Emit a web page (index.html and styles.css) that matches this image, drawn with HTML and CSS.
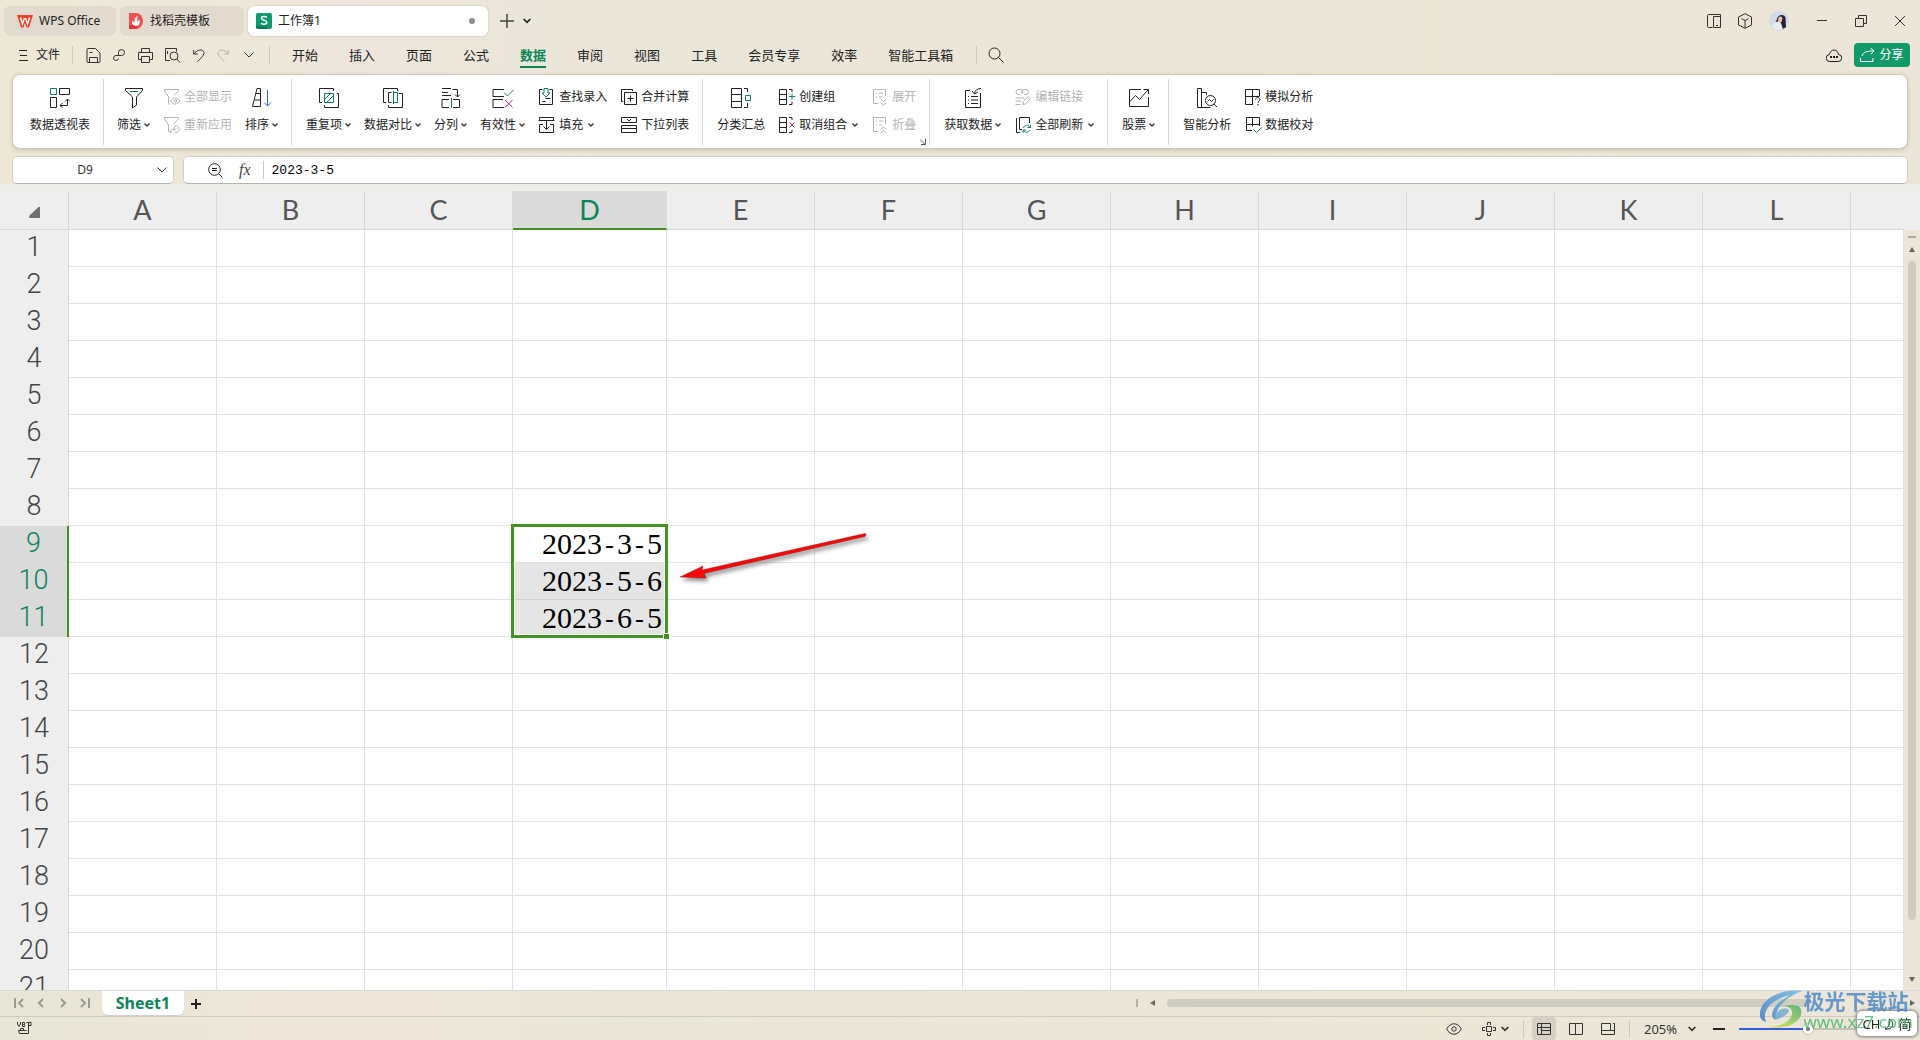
FILE: index.html
```html
<!DOCTYPE html>
<html lang="zh-CN">
<head>
<meta charset="utf-8">
<title>工作簿1 - WPS Office</title>
<link rel="stylesheet" href="styles.css">
</head>
<body>
<svg class="sprite" aria-hidden="true">
  <symbol id="chev" viewBox="0 0 6 6"><path d="M.5 1.500 3 4l2.500-2.500" fill="none" stroke="currentColor" stroke-width="1.300"/></symbol>
  <symbol id="chev-l" viewBox="0 0 10 6"><path d="M.5.5 5 5 9.500.5" fill="none" stroke="currentColor" stroke-width="1"/></symbol>
</svg>
<div class="app">
  <header class="titlebar">
    <button class="doc-tab tab-home">
      <svg width="16" height="13" viewBox="0 0 16 13"><path d="M0 0h16l-4 12.500H9.500L8 8l-1.500 4.500H4z" fill="#f5402c"/><path d="M3.500 2.500 5.500 9 7.500 3M8.500 3l2 6 2-6.500" fill="none" stroke="#fff" stroke-width="1.400"/></svg>
      <span>WPS Office</span></button>
    <button class="doc-tab tab-docer">
      <svg width="14" height="16" viewBox="0 0 14 16"><path d="M0 0h7a7 8 0 0 1 0 16H0z" fill="#ef5350"/><path d="M0 12h8v4H0z" fill="#d9363e"/><path d="M7 13C2 12 3 9 3.500 8l2 2C5 7 6 4 8.500 3 8 5 9 7 8 9l2.500-2C11.500 10 10 13 7 13z" fill="#fff"/></svg>
      <span>找稻壳模板</span></button>
    <button class="doc-tab tab-book">
      <svg width="16" height="16" viewBox="0 0 16 16"><rect width="16" height="16" rx="2" fill="#12996a"/><path d="M0 13h9l3 3H2a2 2 0 0 1-2-2z" fill="#0a7a52"/><path d="M10.800 4.600C10 3.400 5.500 2.800 5.500 5.200S10.800 7 10.800 9.200 6 12 5.200 9.900" fill="none" stroke="#fff" stroke-width="1.500"/></svg>
      <span>工作簿1</span><i class="dot"></i></button>
    <button class="new-tab" aria-label="新建"><svg width="14" height="14" viewBox="0 0 14 14"><path d="M7 0v14M0 7h14" stroke="#444" stroke-width="1.500"/></svg></button>
    <button class="new-more" aria-label="更多"><svg width="8" height="8"><use href="#chev"/></svg></button>
    <div class="window-tools">
      <button aria-label="面板"><svg width="14" height="14" viewBox="0 0 14 14" class="ln"><path d="M5.500 13.500h-4a1 1 0 0 1-1-1v-11a1 1 0 0 1 1-1h12v13h-7v-11h7M9 11.500h2"/></svg></button>
      <button aria-label="应用"><svg width="14" height="16" viewBox="0 0 14 16" class="ln"><path d="M7 .7 13.500 4v8L7 15.300.5 12V4zM3.500 5.700 7 7.500l3.500-1.800M7 7.500v7.500"/></svg></button>
      <button aria-label="账户"><svg width="20" height="20" viewBox="0 0 20 20"><circle cx="10" cy="10" r="10" fill="#cfdbe4"/><path d="M8 8c1-5 8-5 8.500-1l.5 9-3 2-2-6z" fill="#2b2230"/><path d="M9 8c1-3 3-3 4.500-1l-1 4-2.500 1z" fill="#e9c3b4"/><path d="M6.500 10.500 9 7v4z" fill="#4b3038"/><path d="M3 16c1-5 5-6 8-4l2 6c-3 2-8 1-10-2z" fill="#e6eef2"/></svg></button>
      <button aria-label="最小化"><svg width="10" height="10" viewBox="0 0 10 10" class="ln"><path d="M0 4.500h10"/></svg></button>
      <button aria-label="还原"><svg width="12" height="12" viewBox="0 0 12 12" class="ln"><path d="M.5 3.500h8v8h-8zM3.500 3.500v-3h8v8h-3"/></svg></button>
      <button aria-label="关闭"><svg width="10" height="10" viewBox="0 0 10 10" class="ln"><path d="m0 0 10 10M10 0 0 10"/></svg></button>
    </div>
  </header>

  <nav class="menubar">
    <button class="file-btn"><svg width="9" height="11" viewBox="0 0 9 11" class="ln"><path d="M0 .5h8M1 5.500h7M0 10.500h9"/></svg>文件</button>
    <i class="vline"></i>
    <div class="qat">
      <button aria-label="保存"><svg width="15" height="15" viewBox="0 0 15 15" class="ln"><path d="M2 .5h7.500l4.500 4.500v8.500a1 1 0 0 1-1 1H2a1 1 0 0 1-1-1v-12a1 1 0 0 1 1-1zM3.500 14.500v-5h8v5M3.500 4.500h3"/></svg></button>
      <button aria-label="导出"><svg width="13" height="13" viewBox="0 0 13 13" class="ln"><path d="M5.500 6.500V3.500a3 3 0 1 1 3 3h-5.500a2.500 2.500 0 1 0 2.500 3"/></svg></button>
      <button aria-label="打印"><svg width="15" height="15" viewBox="0 0 15 15" class="ln"><path d="M3.500 4.500v-4h8v4M3.500 11.500h-3v-7h14v7h-3M3.500 8.500h8v6h-8z"/></svg></button>
      <button aria-label="打印预览"><svg width="16" height="15" viewBox="0 0 16 15" class="ln"><path d="M5 12.500H.5V.5h11v3M2.500 3v3"/><circle cx="9" cy="8" r="4"/><path d="m12 11 3 3.500"/></svg></button>
      <button aria-label="撤销"><svg width="12" height="13" viewBox="0 0 12 13" class="ln"><path d="M.7 1v4h4M.7 5C4 1 8 .5 9.500 1.500 13 4 10 7.500 4.500 12.500"/></svg></button>
      <button aria-label="恢复" class="off"><svg width="12" height="13" viewBox="0 0 12 13" class="ln"><path d="M11.300 1v4h-4M11.300 5C8 1 4 .5 2.500 1.500-1 4 2 7.500 7.500 12.500"/></svg></button>
      <button aria-label="更多命令" class="qat-more"><svg width="10" height="6"><use href="#chev-l"/></svg></button>
    </div>
    <i class="vline"></i>
    <div class="menu-tabs">
      <a href="#">开始</a><a href="#">插入</a><a href="#">页面</a><a href="#">公式</a><a href="#" class="on">数据</a><a href="#">审阅</a><a href="#">视图</a><a href="#">工具</a><a href="#">会员专享</a><a href="#">效率</a><a href="#">智能工具箱</a>
    </div>
    <i class="vline"></i>
    <button class="search" aria-label="搜索"><svg width="16" height="16" viewBox="0 0 16 16" class="ln"><circle cx="6.500" cy="6.500" r="5.500"/><path d="m10.500 10.500 5 5"/></svg></button>
    <div class="share-area">
      <button aria-label="云状态"><svg width="16" height="13" viewBox="0 0 16 13" class="ln"><path d="M4 12.500a3.500 3.500 0 0 1-.5-7c1-6 8-6 9 0a3.500 3.500 0 0 1-.5 7z"/><path d="M4 8h2M7 8h2M10 8h2" stroke-width="2"/></svg></button>
      <button class="share"><svg width="15" height="15" viewBox="0 0 15 15" class="ln"><path d="M.5 10v3.500h12.500V10M2 8c1-3.500 4-5 11.500-5M10.500 0l3.500 3-3.500 3.500"/></svg>分享</button>
    </div>
  </nav>

  <section class="ribbon">
    <div class="group">
      <button class="big"><svg width="20" height="20" viewBox="0 0 20 20" class="ln"><path d="M9.500.5h10v6h-10zM.5 9.500h6v10h-6z"/><path d="M.5.500h6v6h-6z" class="g"/><path d="M10 17.500h7.500V11M12.500 15 10 17.500l2.500 2M15 13.500 17.500 11l2.500 2.500"/></svg><span>数据透视表</span></button>
    </div>
    <div class="group">
      <button class="big"><svg width="20" height="20" viewBox="0 0 20 20" class="ln"><path d="M1.500.5h17v2L12.500 9v8l-4 3V9L1.500 2.500z"/><path d="M6 3.500h8" class="g"/></svg><span>筛选<svg class="cv"><use href="#chev"/></svg></span></button>
      <div class="stack">
        <button class="small" disabled><svg width="18" height="18" viewBox="0 0 18 18" class="ln"><path d="M5.500 15.500V9L1.500 3V1.500h14V3L11 7.500M5.500 15.500 7 16.500"/><path d="M7.500 13c2-4 7-4 9.500 0-2.500 4-7.500 4-9.500 0z"/><circle cx="12.300" cy="13" r="1.300"/></svg>全部显示</button>
        <button class="small" disabled><svg width="18" height="18" viewBox="0 0 18 18" class="ln"><path d="M5.500 15.500V9L1.500 3V1.500h14V3L10.500 8M5.500 15.500 8 16.500V13M12 16.500h2c3-1 3-6-.5-6.500-2.500 0-2.500 3-2.500 4M9.500 12.500l1.500 2 2-2"/></svg>重新应用</button>
      </div>
      <button class="big"><svg width="20" height="20" viewBox="0 0 20 20" class="ln"><path d="M.5 18.500 5 .5h3.500v18zM4 5.500h4.500M2.500 12h6"/><path d="M15.500 2v16M12 14.500l3.500 3.500 3.500-3.500" class="b"/></svg><span>排序<svg class="cv"><use href="#chev"/></svg></span></button>
    </div>
    <div class="group">
      <button class="big"><svg width="20" height="20" viewBox="0 0 20 20" class="ln"><path d="M3 14.500H.5V.5h14V3M18 5.500h1.500v14h-14V17"/><path d="M5.500 5.500h9v9h-9zM6 11l5-5M8 14l6-6" class="g"/></svg><span>重复项<svg class="cv"><use href="#chev"/></svg></span></button>
      <button class="big"><svg width="20" height="20" viewBox="0 0 20 20" class="ln"><path d="M3 14.500H.5V.5h14V3M8.500 4.500h-3v10h3M16 5.500h3.500v14h-14V17"/><path d="M10.500 3v13M10.500 4.500h4v10h-4" class="g"/></svg><span>数据对比<svg class="cv"><use href="#chev"/></svg></span></button>
      <button class="big"><svg width="20" height="20" viewBox="0 0 20 20" class="ln"><path d="M1 .5h9M1 4.500h6M1 7.500h9M11.500 1.500h5V9M14 6.500 16.500 9 19 6.500M8 11.500H1v8h7M12 11.500h6.500v8H12"/><path d="M10.500 10v10" class="g"/></svg><span>分列<svg class="cv"><use href="#chev"/></svg></span></button>
      <button class="big"><svg width="22" height="20" viewBox="0 0 22 20" class="ln"><path d="M12 1.500H1v7h11M11 11.500H1v8h11"/><path d="m12 4.500 3.500 3.500 6-6" class="g"/><path d="m13 12 7.500 7.500m0-7.500L13 19.500" class="r"/></svg><span>有效性<svg class="cv"><use href="#chev"/></svg></span></button>
      <div class="stack">
        <button class="small"><svg width="18" height="18" viewBox="0 0 18 18" class="ln"><path d="M4.500 1.500h-3v15h13v-15h-3M4.500 13.500h3M7.500 10.500h5"/><path d="M6 .5h4V5h2L8 9 4 5h2z" class="g"/></svg>查找录入</button>
        <button class="small"><svg width="18" height="18" viewBox="0 0 18 18" class="ln"><path d="M1.500 4V1.500h14V4M.5 4.500h16M5 8.500H1.500v8h14v-8H12M8.500 4.500V13M5.500 10.500l3 3 3-3"/></svg>填充<svg class="cv wide"><use href="#chev"/></svg></button>
      </div>
      <div class="stack">
        <button class="small"><svg width="18" height="18" viewBox="0 0 18 18" class="ln"><path d="M3 13.500H1.500v-12h11V3M4.500 4.500h12v12h-12zM10.500 7.500v6M7.500 10.500h6"/></svg>合并计算</button>
        <button class="small"><svg width="18" height="18" viewBox="0 0 18 18" class="ln"><path d="M1.500 1.500h15v5h-15zM1.500 9.500h15v3h-15zM1.500 12.500h15v4h-15zM7 3l2 2 2-2"/></svg>下拉列表</button>
      </div>
    </div>
    <div class="group">
      <button class="big"><svg width="20" height="20" viewBox="0 0 20 20" class="ln"><path d="M.5.5h10v19H.5zM.5 6.500h10M.5 13.500h10M13 .5h3.500V4M16.500 15v4.500H13"/><path d="M14.500 7.500h5v5h-5z" class="g"/></svg><span>分类汇总</span></button>
      <div class="stack">
        <button class="small"><svg width="18" height="18" viewBox="0 0 18 18" class="ln"><path d="M1.500 1.500h7v15h-7zM1.500 6.500h7M1.500 11.500h7M11 1.500h3V4M14 14v2.500h-3"/><path d="M11 8.500h6M14 5.500v6" class="g"/></svg>创建组</button>
        <button class="small"><svg width="18" height="18" viewBox="0 0 18 18" class="ln"><path d="M1.500 1.500h7v15h-7zM1.500 6.500h7M1.500 11.500h7M11 1.500h3V4M14 14v2.500h-3"/><path d="m11.500 6.500 5 5m0-5-5 5" class="r"/></svg>取消组合<svg class="cv wide"><use href="#chev"/></svg></button>
      </div>
      <div class="stack">
        <button class="small" disabled><svg width="18" height="18" viewBox="0 0 18 18" class="ln"><path d="M7 15.500H2.500v-14h12V8M5 5h1M8 5h4M5 9h1M8 9h3M9.500 11l3 2.500 3-2.500M9.500 14.500l3 2.500 3-2.500"/></svg>展开</button>
        <button class="small" disabled><svg width="18" height="18" viewBox="0 0 18 18" class="ln"><path d="M7 15.500H2.500v-14h12V8M5 5h1M8 5h4M5 9h1M8 9h3M9.500 13.500l3-2.500 3 2.500M9.500 17l3-2.500 3 2.500"/></svg>折叠</button>
      </div>
      <button class="launcher" aria-label="分级显示设置"><svg width="6" height="6" viewBox="0 0 6 6" class="ln"><path d="M0 .5l4.500 4.500M5.500 0v5.500H1"/></svg></button>
    </div>
    <div class="group">
      <button class="big"><svg width="20" height="20" viewBox="0 0 20 20" class="ln"><path d="M7 2.500H2.500v17h15V5M5 8.500h1M8 8.500h7M5 12h1M8 12h7M5 15.500h1M8 15.500h7M18 .5c-4 0-6 2-6.500 5M9 3l2.500 3L15 4"/></svg><span>获取数据<svg class="cv"><use href="#chev"/></svg></span></button>
      <div class="stack">
        <button class="small" disabled><svg width="18" height="18" viewBox="0 0 18 18" class="ln"><path d="M6 6.500H4.500a2.500 2.500 0 0 1 0-5H6a2.500 2.500 0 0 1 2.500 4M10 6.500h2a2.500 2.500 0 0 0 0-5h-2a2.500 2.500 0 0 0-2 4M1.500 10h9M1.500 13h6M1.500 16.500h5M9 16.500l.5-3L14 8.500l2.500 2-5 5.500z"/></svg>编辑链接</button>
        <button class="small"><svg width="18" height="18" viewBox="0 0 18 18" class="ln"><path d="M2.500 2v14.500H6M8 13.500H5.500v-12h10V7"/><path d="M16 11.500c-1-3-6-3-6.500.5M9.500 14c.5 3 5.500 3 6.500 0M16.500 8.500v3h-3M9 17v-3h3" class="g"/></svg>全部刷新<svg class="cv wide"><use href="#chev"/></svg></button>
      </div>
    </div>
    <div class="group">
      <button class="big"><svg width="20" height="20" viewBox="0 0 20 20" class="ln"><path d="M12 1.500H.5v17h19V9M1 13.500l5.500-6 4 4L19 2M14.500 1.500h5V6"/></svg><span>股票<svg class="cv"><use href="#chev"/></svg></span></button>
    </div>
    <div class="group last">
      <button class="big"><svg width="22" height="20" viewBox="0 0 22 20" class="ln"><path d="M1.500.5h4v19h-4zM5.500 4.500h5V7M5.500 19.500h9"/><circle cx="14.500" cy="12.500" r="5"/><path d="m18 16 3 3M11.500 13.500l2-2 2 2 2-2"/></svg><span>智能分析</span></button>
      <div class="stack">
        <button class="small"><svg width="18" height="18" viewBox="0 0 18 18" class="ln"><path d="M1.500 1.500h14V8M1.500 1.500v15H9M8.500 1.500v15M1.500 8.500h14M11.500 11.500c0-2.500 4.500-2.500 4.500 0 0 1.500-2 1.500-2 3.500M14 16v1.500"/></svg>模拟分析</button>
        <button class="small"><svg width="18" height="18" viewBox="0 0 18 18" class="ln"><path d="M8 14.500H2.500v-13h13V10M8.500 1.500v9M2.500 8.500h13"/><path d="m9.500 13.500 3 3 5-5" class="g"/></svg>数据校对</button>
      </div>
    </div>
  </section>

  <section class="formula-row">
    <div class="name-box"><input type="text" value="D9" aria-label="名称框"><button aria-label="展开名称框"><svg width="10" height="6"><use href="#chev-l"/></svg></button></div>
    <div class="formula-box">
      <button aria-label="缩放"><svg width="15" height="15" viewBox="0 0 15 15" class="ln"><circle cx="6.500" cy="6.500" r="5.800"/><path d="m10.500 10.500 4 4M4 5.500h5M4 7.500h5"/></svg></button>
      <button class="fx" aria-label="插入函数"><i>f</i><b>x</b></button>
      <i class="vline"></i>
      <input type="text" value="2023-3-5" aria-label="编辑栏">
    </div>
  </section>

  <main class="sheet">
    <div class="grid-pane">
      <table class="grid">
        <colgroup><col class="c-head"><col><col><col><col class="c-date"><col><col><col><col><col><col><col><col><col class="c-rest"></colgroup>
        <thead><tr><th class="corner"><svg width="11" height="11" viewBox="0 0 11 11"><path d="M11 0v11H1q-2-1 0-3L9 .5q1-1 2-.5z" fill="#707070"/></svg></th><th>A</th><th>B</th><th>C</th><th class="sel">D</th><th>E</th><th>F</th><th>G</th><th>H</th><th>I</th><th>J</th><th>K</th><th>L</th><th></th></tr></thead>
        <tbody>
          <tr><th>1</th><td></td><td></td><td></td><td></td><td></td><td></td><td></td><td></td><td></td><td></td><td></td><td></td><td></td></tr>
          <tr><th>2</th><td></td><td></td><td></td><td></td><td></td><td></td><td></td><td></td><td></td><td></td><td></td><td></td><td></td></tr>
          <tr><th>3</th><td></td><td></td><td></td><td></td><td></td><td></td><td></td><td></td><td></td><td></td><td></td><td></td><td></td></tr>
          <tr><th>4</th><td></td><td></td><td></td><td></td><td></td><td></td><td></td><td></td><td></td><td></td><td></td><td></td><td></td></tr>
          <tr><th>5</th><td></td><td></td><td></td><td></td><td></td><td></td><td></td><td></td><td></td><td></td><td></td><td></td><td></td></tr>
          <tr><th>6</th><td></td><td></td><td></td><td></td><td></td><td></td><td></td><td></td><td></td><td></td><td></td><td></td><td></td></tr>
          <tr><th>7</th><td></td><td></td><td></td><td></td><td></td><td></td><td></td><td></td><td></td><td></td><td></td><td></td><td></td></tr>
          <tr><th>8</th><td></td><td></td><td></td><td></td><td></td><td></td><td></td><td></td><td></td><td></td><td></td><td></td><td></td></tr>
          <tr><th class="sel">9</th><td></td><td></td><td></td><td class="date first">2023<s>-</s>3<s>-</s>5<div class="selection"></div></td><td></td><td></td><td></td><td></td><td></td><td></td><td></td><td></td><td></td></tr>
          <tr><th class="sel">10</th><td></td><td></td><td></td><td class="date shade">2023<s>-</s>5<s>-</s>6</td><td></td><td></td><td></td><td></td><td></td><td></td><td></td><td></td><td></td></tr>
          <tr><th class="sel">11</th><td></td><td></td><td></td><td class="date shade">2023<s>-</s>6<s>-</s>5</td><td></td><td></td><td></td><td></td><td></td><td></td><td></td><td></td><td></td></tr>
          <tr><th>12</th><td></td><td></td><td></td><td></td><td></td><td></td><td></td><td></td><td></td><td></td><td></td><td></td><td></td></tr>
          <tr><th>13</th><td></td><td></td><td></td><td></td><td></td><td></td><td></td><td></td><td></td><td></td><td></td><td></td><td></td></tr>
          <tr><th>14</th><td></td><td></td><td></td><td></td><td></td><td></td><td></td><td></td><td></td><td></td><td></td><td></td><td></td></tr>
          <tr><th>15</th><td></td><td></td><td></td><td></td><td></td><td></td><td></td><td></td><td></td><td></td><td></td><td></td><td></td></tr>
          <tr><th>16</th><td></td><td></td><td></td><td></td><td></td><td></td><td></td><td></td><td></td><td></td><td></td><td></td><td></td></tr>
          <tr><th>17</th><td></td><td></td><td></td><td></td><td></td><td></td><td></td><td></td><td></td><td></td><td></td><td></td><td></td></tr>
          <tr><th>18</th><td></td><td></td><td></td><td></td><td></td><td></td><td></td><td></td><td></td><td></td><td></td><td></td><td></td></tr>
          <tr><th>19</th><td></td><td></td><td></td><td></td><td></td><td></td><td></td><td></td><td></td><td></td><td></td><td></td><td></td></tr>
          <tr><th>20</th><td></td><td></td><td></td><td></td><td></td><td></td><td></td><td></td><td></td><td></td><td></td><td></td><td></td></tr>
          <tr><th>21</th><td></td><td></td><td></td><td></td><td></td><td></td><td></td><td></td><td></td><td></td><td></td><td></td><td></td></tr>
        </tbody>
      </table>
      <svg class="pointer" width="200" height="60" viewBox="0 0 200 60"><path d="M2 47 25 36l-1 4L187 3.500q2 1 0 3L26 43.500l2 4.500z" fill="#f80808" stroke="#8a1010" stroke-width=".4"/></svg>
    </div>
    <div class="vscroll">
      <i class="split"></i>
      <svg width="8" height="5" viewBox="0 0 8 5"><path d="M4 0 7 5H1z" fill="#666"/></svg>
      <i class="thumb"></i>
      <svg width="8" height="5" viewBox="0 0 8 5"><path d="M4 5 7 0H1z" fill="#666"/></svg>
    </div>
  </main>

  <div class="sheetbar">
    <div class="sheet-nav">
      <button aria-label="第一张"><svg width="10" height="10" viewBox="0 0 10 10"><path d="M1 0v10M9 1 5 5l4 4"/></svg></button>
      <button aria-label="上一张"><svg width="10" height="10" viewBox="0 0 10 10"><path d="M7 1 3 5l4 4"/></svg></button>
      <button aria-label="下一张"><svg width="10" height="10" viewBox="0 0 10 10"><path d="m3 1 4 4-4 4"/></svg></button>
      <button aria-label="最后一张"><svg width="10" height="10" viewBox="0 0 10 10"><path d="M9 0v10M1 1l4 4-4 4"/></svg></button>
    </div>
    <button class="sheet-tab">Sheet1</button>
    <button class="sheet-add" aria-label="新建工作表"><svg width="10" height="10" viewBox="0 0 10 10"><path d="M5 0v10M0 5h10" stroke="#222" stroke-width="2"/></svg></button>
    <div class="hscroll">
      <i class="split"></i>
      <svg width="5" height="6" viewBox="0 0 5 6"><path d="M0 3 5 0v6z" fill="#666"/></svg>
      <i class="track"><i class="thumb"></i></i>
      <svg width="5" height="6" viewBox="0 0 5 6"><path d="M5 3 0 0v6z" fill="#666"/></svg>
    </div>
  </div>

  <footer class="status">
    <svg width="15" height="13" viewBox="0 0 15 13" class="ln"><path d="M.5 0v2L2 4.500 3.500 2V0M5.500.500h2L8 2 6.500 2.500 8 3.500 7.500 4.500h-2zM9.500.5h4.500v3h-2.500M11.500.5v11h-9l-1-3h8M3.500 8.500v-2h3v2"/></svg>
    <div class="status-right">
      <button aria-label="护眼模式"><svg width="16" height="12" viewBox="0 0 16 12" class="ln"><path d="M.7 6c3.600-7 11-7 14.600 0-3.600 7-11 7-14.600 0z"/><circle cx="8" cy="6" r="2.200"/></svg></button>
      <button class="focus-btn" aria-label="阅读模式"><svg width="14" height="14" viewBox="0 0 14 14" class="ln"><path d="M4.500 4.500h5v5h-5zM5.500 3V.5h3V3M5.500 11v2.500h3V11M3 5.500H.5v3H3M11 5.500h2.500v3H11"/></svg><svg width="8" height="8"><use href="#chev"/></svg></button>
      <i class="vline"></i>
      <button class="view on" aria-label="普通视图"><svg width="14" height="12" viewBox="0 0 14 12" class="ln"><path d="M.5.5h13v11H.5zM4.500.5v11M.5 4.500h13M5 7.500h8.500"/></svg></button>
      <button class="view" aria-label="分页预览"><svg width="14" height="12" viewBox="0 0 14 12" class="ln"><path d="M.5.5h13v11H.5zM6.500.5v11"/></svg></button>
      <button class="view" aria-label="页面布局"><svg width="14" height="12" viewBox="0 0 14 12" class="ln"><path d="M.5.5h9v7h-9zM.5 7.500v4h13V.5H12M9.500 7.500h4"/></svg></button>
      <i class="vline"></i>
      <label class="zoom"><select aria-label="显示比例"><option>205%</option></select><svg width="8" height="8"><use href="#chev"/></svg></label>
      <button class="minus" aria-label="缩小"><svg width="12" height="12" viewBox="0 0 12 12"><path d="M0 6h12" stroke="#222" stroke-width="2"/></svg></button>
      <input type="range" min="0" max="100" value="50" aria-label="缩放滑块">
    </div>
  </footer>
</div>

<div class="ime"><span>CH</span><svg width="10" height="12" viewBox="0 0 10 12" class="ln"><path d="M5 1c5 2 5 9 0 10H1c4-2 6-6 4-10z"/></svg><span>简</span></div>
<div class="watermark">
  <svg width="44" height="40" viewBox="0 0 44 40">
    <defs><linearGradient id="wa" x1="0" y1="1" x2="1" y2="0"><stop offset="0" stop-color="#3a78c0"/><stop offset="1" stop-color="#64bce8"/></linearGradient>
    <linearGradient id="wb" x1="0" y1="1" x2="1" y2="0"><stop offset="0" stop-color="#e8e23c"/><stop offset="1" stop-color="#3cab68"/></linearGradient></defs>
    <path d="M43 1C20-2 0 11 1 25c0 4 3 6 6 7-4-10 3-22 24-27-14 8-18 15-18 20 0 3 2 4 4 5-1-12 8-22 26-29z" fill="url(#wa)"/>
    <path d="M25 16c14-3 19 1 17 9-3 9-17 15-36 12 12 0 22-3 26-10 3-6 0-10-7-11z" fill="url(#wb)"/>
    <path d="M16 30c5-2 13-4 14-10-5-4-15 1-14 10z" fill="#6ba6d6"/>
  </svg>
  <div><p class="wm-name">极光下载站</p><p class="wm-url">www.xz7.com</p></div>
</div>
</body>
</html>
```

FILE: styles.css
```css
* { box-sizing: border-box; }
body {
  margin: 0;
  font: 12px/18px "Noto Sans", "Noto Sans CJK SC", sans-serif;
  color: #222;
}
button, input, select {
  font: inherit;
  color: inherit;
  background: none;
  border: 0;
  padding: 0;
  margin: 0;
}
button { display: flex; align-items: center; justify-content: center; white-space: nowrap; }
svg { display: block; flex: none; }
p { margin: 0; }
.sprite { position: absolute; width: 0; height: 0; }
.ln { fill: none; stroke: currentColor; stroke-width: 1; }
.ln .g { stroke: #0b8457; }
.ln .b { stroke: #2f5fe0; }
.ln .r { stroke: #d02850; }
.vline { width: 1px; height: 18px; background: #cfcac0; flex: none; }

.app {
  height: 100vh;
  display: flex;
  flex-direction: column;
  overflow: hidden;
  background: linear-gradient(90deg, #ede8d5 0, #eee6dc 18%, #e9e6d9 33%, #ece5d8 50%, #ebe6d6 75%, #ece5d9 100%);
}

/* title bar */
.titlebar { display: flex; align-items: center; height: 42px; padding: 0 15px 0 4px; gap: 4px; }
.doc-tab {
  height: 30px;
  border-radius: 6px;
  background: #e2dacf;
  justify-content: flex-start;
  padding: 0 9px;
  gap: 7px;
}
.tab-home { width: 112px; padding-left: 13px; gap: 6px; }
.tab-docer { width: 124px; }
.tab-book { width: 240px; background: #fff; box-shadow: 0 0 2px #b9b3a6; padding-left: 8px; gap: 6px; }
.dot { width: 6px; height: 6px; border-radius: 50%; background: #8c8c8c; margin: 0 4px 0 auto; }
.new-tab { margin-left: 8px; }
.new-more { margin-left: 5px; }
.window-tools { margin-left: auto; display: flex; align-items: center; color: #333; }
.window-tools button { margin-left: 17px; }
.window-tools button:nth-child(n+4) { margin-left: 28px; }

/* menu bar */
.menubar { display: flex; align-items: center; height: 26px; padding: 0 10px 0 19px; }
.file-btn { gap: 8px; margin-right: 12px; }
.qat { display: flex; align-items: center; gap: 12px; padding: 0 15px 0 13px; color: #333; }
.qat-more { margin-left: 3px; }
.off { color: #b5b0a8; }
.menu-tabs { display: flex; gap: 31px; padding: 0 23px 0 22px; font-size: 13px; }
.menu-tabs a { color: inherit; text-decoration: none; line-height: 22px; height: 26px; border-bottom: 2px solid transparent; padding-top: 2px; }
.menu-tabs a.on { color: #0b8457; font-weight: 700; border-color: #0b8457; }
.search { margin-left: 11px; }
.share-area { margin-left: auto; display: flex; gap: 12px; }
.share { width: 56px; height: 24px; border-radius: 4px; background: #12996a; color: #fff; gap: 4px; }

/* ribbon */
.ribbon {
  display: flex;
  height: 75px;
  margin: 6px 12px 0;
  padding-left: 4px;
  background: #fff;
  border: 1px solid #d0cbbb;
  border-radius: 8px;
  box-shadow: 0 1px 4px #c8c3b2;
}
.group {
  display: flex;
  gap: 13px;
  height: 66px;
  margin-top: 4px;
  padding: 9px 13px 0;
  border-right: 1px solid #d8d8d8;
  position: relative;
}
.group:nth-child(n+3) { padding-left: 14px; }
.group.last { border: 0; }
.big { flex-direction: column; justify-content: flex-start; gap: 8px; }
.big > span { display: flex; align-items: center; gap: 3px; }
.cv { width: 6px; height: 6px; color: #333; }
.cv.wide { margin-left: 2px; }
.stack { display: flex; flex-direction: column; gap: 10px; align-items: flex-start; }
.small { gap: 3px; height: 18px; }
.small:disabled { color: #b4b4b4; }
.launcher { position: absolute; right: 3px; bottom: 0; color: #555; }

/* formula row */
.formula-row { display: flex; gap: 9px; height: 28px; margin: 7px 12px 0; }
.name-box, .formula-box {
  display: flex;
  align-items: center;
  background: #fff;
  border: 1px solid #d6d1c6;
  border-bottom-color: #b5b5b0;
  border-radius: 5px;
}
.name-box { width: 162px; padding-right: 6px; color: #333; }
.name-box input { flex: 1; min-width: 0; text-align: center; }
.formula-box { flex: 1; padding-left: 24px; }
.formula-box input { flex: 1; font: 13px "Liberation Mono", monospace; color: #000; padding-left: 8px; }
.fx { font: 16px/20px "Liberation Serif", serif; margin: 0 12px 0 16px; color: #444; }
.fx b { font-style: italic; font-weight: 400; }

/* grid */
.sheet {
  flex: 1;
  min-height: 0;
  display: flex;
  padding-top: 7px;
  background: linear-gradient(#edece6, #eee 7px);
}
.grid-pane { flex: 1; min-width: 0; overflow: hidden; position: relative; }
.grid { table-layout: fixed; width: 100%; border-spacing: 0; }
.grid col { width: 148px; }
.grid .c-head { width: 69px; }
.grid .c-date { width: 154px; }
.grid .c-rest { width: auto; }
.grid th, .grid td { padding: 0; height: 37px; border: 0 solid #e2e2e2; border-width: 0 1px 1px 0; }
.grid td { background: #fff; }
.grid th { background: #eee; font: 300 27px/30px Roboto, sans-serif; color: #444; border-color: #d8d8d8; }
.grid thead th { height: 39px; font: 400 27px/30px Lato, sans-serif; color: #555; }
.grid thead th:last-child { border-right: 0; }
.corner svg { margin: 4px 0 0 29px; }
.grid tbody th { border-bottom: 0; padding-bottom: 3px; }
.grid th.sel { background: #dadada; color: #0b8457; }
.grid thead th.sel { border-bottom: 2px solid #429321; }
.grid tbody th.sel { border-right: 2px solid #429321; }
.grid td.date { font: 30px/32px "Liberation Serif", serif; color: #000; text-align: right; padding-right: 4px; position: relative; vertical-align: bottom; }
.grid td.date s { font: 25px/28px "Liberation Mono", monospace; text-decoration: none; }
.grid td.shade { background: #e5e5e5; border-bottom-color: #d0d0d0; }
.selection { position: absolute; z-index: 1; left: -2px; right: -2px; top: -2px; height: 114px; border: 3px solid #429321; box-shadow: inset 0 0 0 1px #fff; }
.selection::after { content: ""; position: absolute; right: -4px; bottom: -4px; width: 5px; height: 5px; background: #429321; outline: 1px solid #fff; }
.pointer { position: absolute; left: 678px; top: 339px; filter: drop-shadow(2px 3px 2px #888); }
.vscroll { width: 16px; margin-top: 39px; display: flex; flex-direction: column; align-items: center; background: #ebe6d8; padding: 6px 0 8px; gap: 9px; }
.vscroll .split { width: 8px; height: 2px; background: #aca99f; }
.vscroll .thumb { flex: 1; width: 8px; border-radius: 4px; background: #cfccc2; margin-bottom: 48px; }

/* sheet tabs */
.sheetbar { display: flex; align-items: flex-start; height: 27px; border-top: 1px solid #d8d8d8; border-bottom: 1px solid #cfccc0; background: linear-gradient(90deg, #e8e6d6, #efe6da 18%, transparent 30%); }
.sheet-nav { display: flex; gap: 12px; padding: 7px 12px 0 14px; }
.sheet-nav path { fill: none; stroke: #9c9a92; stroke-width: 2; }
.sheet-tab { width: 82px; height: 24px; background: #fff; border-radius: 0 0 6px 6px; color: #0b8457; font-size: 16px; font-weight: 700; box-shadow: 0 1px 1px #d0d0d0; }
.sheet-add { margin: 8px 0 0 7px; }
.hscroll { margin: 4px 0 0 auto; width: 41%; display: flex; align-items: center; height: 16px; padding-right: 5px; gap: 12px; }
.hscroll .split { width: 2px; height: 8px; background: #b3b0a6; margin-left: 3px; }
.hscroll .track { flex: 1; display: flex; }
.hscroll .thumb { height: 8px; width: 88%; border-radius: 4px; background: #cfccc2; }

/* status bar */
.status { display: flex; align-items: center; height: 23px; padding: 0 43px 0 17px; background: linear-gradient(90deg, #e8e6d6, #efe6da 18%, transparent 30%); color: #333; }
.status-right { margin-left: auto; display: flex; align-items: center; }
.focus-btn { gap: 5px; margin: 0 14px 0 20px; }
.view { width: 24px; height: 23px; margin-left: 8px; border-radius: 4px; }
.view.on { background: #d6d0c6; }
.view + .vline { margin: 0 14px 0 9px; }
.zoom { display: flex; align-items: center; gap: 11px; font-size: 13px; }
.zoom select { appearance: none; width: 33px; }
.minus { margin: 0 14px 0 17px; }
.status input[type=range] { appearance: none; width: 138px; height: 10px; background: linear-gradient(90deg, #2f5fe0 50%, #c4c0b6 50%) center / 100% 2px no-repeat; }
.status input[type=range]::-webkit-slider-thumb { appearance: none; width: 10px; height: 10px; border-radius: 50%; background: #777; border: 3px solid #fff; box-shadow: 0 0 2px #888; }

/* floating overlays */
.ime { position: fixed; right: 3px; bottom: 4px; width: 60px; height: 25px; display: flex; align-items: center; justify-content: center; gap: 4px; background: #fff; border-radius: 5px; box-shadow: 0 0 3px 1px #777; font-size: 13px; }
.watermark { position: fixed; right: 7px; bottom: 8px; display: flex; align-items: flex-start; opacity: .8; }
.wm-name { font-size: 21px; line-height: 22px; font-weight: 700; color: #4486c8; }
.wm-url { font-size: 17px; line-height: 20px; color: #3cb464; }
```
